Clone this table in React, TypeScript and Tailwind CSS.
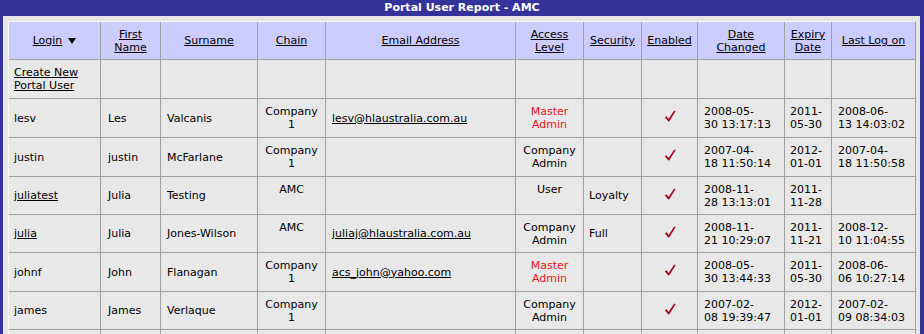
import React from "react"

// column order: login, first, surname, chain, email, access, security, enabled, changed, expiry, lastlog
const cols = "grid grid-cols-[91px_59px_96px_67px_189px_67px_57px_55px_86px_46px_83px] gap-px"

function Check() {
  return (
    <svg width="12" height="12" viewBox="0 0 12 12">
      <path d="M0.8 7.2 L2.5 6.3 L4.6 8.9 L10.2 0.4 L11.6 1.3 L5.1 11.6 L4.3 11.6 Z" fill="#a8001c" />
    </svg>
  )
}

function Two({ a, b }: { a: string; b: string }) {
  return (
    <span>
      {a}
      <br />
      {b}
    </span>
  )
}

const Red = ({ children }: { children: React.ReactNode }) => <span className="text-[#e8141c]">{children}</span>

const cellBase = "bg-[#e8e8e8] flex"
// alignment per column
const align = [
  "items-center pl-[5px]",
  "items-center pl-[7px]",
  "items-center pl-[6px]",
  "justify-center text-center pt-[6px]",
  "items-center pl-[6px]",
  "justify-center text-center pt-[6px]",
  "items-center pl-[5px]",
  "justify-center pt-[11px]",
  "items-center pl-[6px]",
  "items-center pl-[5px]",
  "items-center pl-[6px]",
]

const rows: { h: string; cells: React.ReactNode[] }[] = [
  {
    h: "h-[38px]",
    cells: [
      <a className="underline"><Two a="Create New" b="Portal User" /></a>,
      "", "", "", "", "", "", "", "", "", "",
    ],
  },
  {
    h: "h-[38px]",
    cells: [
      "lesv", "Les", "Valcanis", <Two a="Company" b="1" />,
      <a className="underline">lesv@hlaustralia.com.au</a>,
      <Red><Two a="Master" b="Admin" /></Red>, "", <Check />,
      <Two a="2008-05-" b="30 13:17:13" />, <Two a="2011-" b="05-30" />, <Two a="2008-06-" b="13 14:03:02" />,
    ],
  },
  {
    h: "h-[38px]",
    cells: [
      "justin", "justin", "McFarlane", <Two a="Company" b="1" />, "",
      <Two a="Company" b="Admin" />, "", <Check />,
      <Two a="2007-04-" b="18 11:50:14" />, <Two a="2012-" b="01-01" />, <Two a="2007-04-" b="18 11:50:58" />,
    ],
  },
  {
    h: "h-[37px]",
    cells: [
      <a className="underline">juliatest</a>, "Julia", "Testing", "AMC", "",
      "User", "Loyalty", <Check />,
      <Two a="2008-11-" b="28 13:13:01" />, <Two a="2011-" b="11-28" />, "",
    ],
  },
  {
    h: "h-[37px]",
    cells: [
      <a className="underline">julia</a>, "Julia", "Jones-Wilson", "AMC",
      <a className="underline">juliaj@hlaustralia.com.au</a>,
      <Two a="Company" b="Admin" />, "Full", <Check />,
      <Two a="2008-11-" b="21 10:29:07" />, <Two a="2011-" b="11-21" />, <Two a="2008-12-" b="10 11:04:55" />,
    ],
  },
  {
    h: "h-[38px]",
    cells: [
      "johnf", "John", "Flanagan", <Two a="Company" b="1" />,
      <a className="underline">acs_john@yahoo.com</a>,
      <Red><Two a="Master" b="Admin" /></Red>, "", <Check />,
      <Two a="2008-05-" b="30 13:44:33" />, <Two a="2011-" b="05-30" />, <Two a="2008-06-" b="06 10:27:14" />,
    ],
  },
  {
    h: "h-[37px]",
    cells: [
      "james", "James", "Verlaque", <Two a="Company" b="1" />, "",
      <Two a="Company" b="Admin" />, "", <Check />,
      <Two a="2007-02-" b="08 19:39:47" />, <Two a="2012-" b="01-01" />, <Two a="2007-02-" b="09 08:34:03" />,
    ],
  },
  {
    h: "h-[38px]",
    cells: ["", "", "", "", "", "", "", "", "", "", ""],
  },
]

const headers: React.ReactNode[] = [
  <span className="flex items-center gap-[6px]">
    <a className="underline">Login</a>
    <svg width="8" height="6" viewBox="0 0 8 6"><polygon points="0,0 8,0 4,6" fill="#000" /></svg>
  </span>,
  <a className="underline"><Two a="First" b="Name" /></a>,
  <a className="underline">Surname</a>,
  <a className="underline">Chain</a>,
  <a className="underline">Email Address</a>,
  <a className="underline"><Two a="Access" b="Level" /></a>,
  <a className="underline">Security</a>,
  <a className="underline">Enabled</a>,
  <a className="underline"><Two a="Date" b="Changed" /></a>,
  <a className="underline"><Two a="Expiry" b="Date" /></a>,
  <a className="underline">Last Log on</a>,
]

export default function App() {
  return (
    <div className="w-[924px] h-[334px] overflow-hidden bg-[#e6e6e6] font-['DejaVu_Sans',Verdana,sans-serif] text-[11px] leading-[13px] text-black">
      <div className="h-[16px] bg-[#333399] text-white font-bold text-center leading-[16px]">
        Portal User Report - AMC
      </div>
      <div className="flex h-[318px] border-l-[3px] border-r-[4px] border-[#333399] pl-[5px] pr-[4px] pt-[5px]">
        <div className="border-l border-t border-[#f8f8f8] border-r-[#a0a0a0]  border-r self-start">
          <div className={cols + " bg-[#a0a0a0]"}>
            {headers.map((h, i) => (
              <div key={i} className="bg-[#ccccff] h-[37px] flex items-center justify-center text-center">
                {h}
              </div>
            ))}
            {rows.map((r, ri) =>
              r.cells.map((c, ci) => (
                <div key={ri + "-" + ci} className={cellBase + " " + r.h + " " + align[ci]}>
                  {c}
                </div>
              ))
            )}
          </div>
        </div>
      </div>
    </div>
  )
}
